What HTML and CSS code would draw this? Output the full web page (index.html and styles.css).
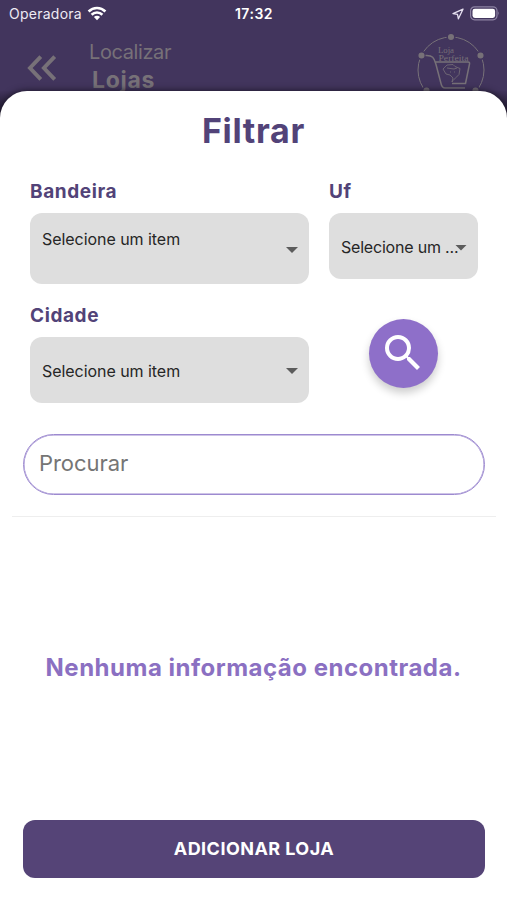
FILE: index.html
```html
<!DOCTYPE html>
<html lang="pt-BR">
<head>
<meta charset="utf-8">
<title>Filtrar lojas</title>
<link rel="stylesheet" href="styles.css">
</head>
<body>
<div class="screen">
  <header class="top">
    <div class="status">
      <div class="carrier"><span>Operadora</span>
        <svg width="20" height="15" viewBox="0 0 20 15" fill="none" stroke="#fff" stroke-width="2.6"><path d="M1.6 5.5a12 12 0 0 1 16.8 0M4.6 8.7a7.7 7.7 0 0 1 10.8 0"/><path d="M10 14.2 6.9 11.1a4.4 4.4 0 0 1 6.2 0Z" fill="#fff" stroke="none"/></svg>
      </div>
      <div class="clock">17:32</div>
      <div class="indicators">
        <svg width="12" height="12" viewBox="0 0 12 12" fill="none" stroke="#e6e0f0" stroke-width="1.3" stroke-linejoin="round"><path d="M11 1.2 1 5.6l4.5.8.9 4.4Z"/></svg>
        <svg width="30" height="15" viewBox="0 0 30 15"><rect x=".6" y=".8" width="26.4" height="13" rx="4" fill="none" stroke="#8d83a3" stroke-width="1.2"/><rect x="2.5" y="2.7" width="22.6" height="9.2" rx="2.3" fill="#fff"/><path d="M28 5.2q1.8 2 0 4.2Z" fill="#8d83a3"/></svg>
      </div>
    </div>
    <div class="bar">
      <svg class="back" width="30" height="26" viewBox="0 0 30 26" fill="none" stroke="#777178" stroke-width="3.9"><path d="M13.8 1.7 3 13l10.8 11.3M27.7 1.7 16.9 13l10.8 11.3"/></svg>
      <div class="heading"><div class="over">Localizar</div><div class="name">Lojas</div></div>
      <svg class="logo" width="70" height="70" viewBox="0 0 70 70" fill="none" stroke="#777178">
        <circle cx="34" cy="37" r="33" stroke-width="1"/>
        <g fill="#777178" stroke="#42355d" stroke-width="1.5"><circle cx="34" cy="4" r="3.8"/><circle cx="4.5" cy="22.5" r="3.8"/><circle cx="63.5" cy="22.5" r="3.8"/><circle cx="9.5" cy="57.5" r="3.8"/><circle cx="58.5" cy="57.5" r="3.8"/></g>
        <path d="M8.500 22.500c8-.5 8.500 3 10.500 9l5 19q1 4.500 4 4.500h20M18.500 29H51q2 0 1.500 2l-4 19.500H35" stroke-width="1.5"/>
        <path d="m35 49 1-4-3-3-4-1-3-5 4-4 6-.5 2 2 5 2-1 6-3 3-3 3ZM30 35l7 1 3-1M33 39h1M37 39h1" stroke-width=".8"/>
        <g class="brand" fill="#777178" stroke="none"><text x="21" y="20" textLength="16" lengthAdjust="spacingAndGlyphs">Loja</text><text x="21.5" y="27.5" textLength="30" lengthAdjust="spacingAndGlyphs">Perfeita</text></g>
      </svg>
    </div>
  </header>
  <main class="sheet">
    <h1>Filtrar</h1>
    <div class="filters">
      <section><label>Bandeira</label><div class="select tall"><span>Selecione um item</span><i></i></div></section>
      <section><label>Uf</label><div class="select short"><span>Selecione um ...</span><i></i></div></section>
      <section class="city"><label>Cidade</label><div class="select"><span>Selecione um item</span><i></i></div></section>
      <div class="action"><button class="search"><svg width="48" height="48" viewBox="0 0 24 24" fill="#fff"><path d="M15.500 14h-.79l-.28-.27A6.470 6.470 0 0 0 16 9.500 6.500 6.500 0 1 0 9.500 16c1.610 0 3.090-.59 4.230-1.570l.27.28v.79l5 4.990L20.490 19l-4.990-5zm-6 0C7.010 14 5 11.990 5 9.500S7.010 5 9.500 5 14 7.010 14 9.500 11.990 14 9.500 14z"/></svg></button></div>
    </div>
    <div class="query">Procurar</div>
    <hr>
    <p class="empty">Nenhuma informação encontrada.</p>
    <button class="add">ADICIONAR LOJA</button>
  </main>
</div>
</body>
</html>
```
FILE: styles.css
```css
* { box-sizing: border-box; }
body { margin: 0; font-family: Inter, "Liberation Sans", sans-serif; }
button { border: 0; padding: 0; font-family: inherit; }
svg { display: block; flex: none; }
.screen { width: 507px; height: 900px; overflow: hidden; display: flex; flex-direction: column; background: linear-gradient(#42355d 90px, #181323 118px); }
.top { height: 91px; flex: none; background: #42355d; color: #fff; }
.status { height: 28px; display: grid; grid-template-columns: 1fr auto 1fr; align-items: center; padding: 0 7px 0 9px; }
.carrier { display: flex; gap: 5px; align-items: center; font-size: 14px; letter-spacing: .25px; color: #eeeaf4; }
.carrier span, .clock { margin-top: -2px; }
.carrier svg { margin-top: -2px; }
.clock { margin-left: -1px; font-size: 14px; font-weight: 600; letter-spacing: .5px; }
.indicators { display: flex; justify-content: flex-end; align-items: center; gap: 6px; }
.indicators svg:last-child { margin-top: -2px; }
.bar { display: flex; height: 63px; color: #777178; }
.back { margin: 27px 0 0 27px; }
.heading { margin-left: 32px; white-space: nowrap; }
.over { margin-top: 10px; height: 28px; line-height: 28px; font-size: 20px; letter-spacing: -.4px; }
.name { height: 28px; line-height: 28px; margin-left: 3px; font-size: 23px; font-weight: 700; letter-spacing: .7px; }
.logo { margin: 5px 20px 0 auto; }
.brand { font: 8px "Liberation Serif", serif; }
.sheet { flex: 1; position: relative; background: #fff; border-radius: 27px 27px 0 0; box-shadow: 0 0 7px #181323; display: flex; flex-direction: column; }
h1 { margin: 20px 0 0; height: 40px; line-height: 40px; text-align: center; font-size: 34px; letter-spacing: .7px; color: #524378; }
.filters { display: grid; grid-template-columns: 279px 149px; column-gap: 20px; margin: 28px 30px 0; }
label { display: block; height: 34px; line-height: 25px; font-size: 19px; font-weight: 700; letter-spacing: .6px; color: #524378; }
.select { height: 66px; display: flex; align-items: center; justify-content: space-between; background: #dedede; border-radius: 12px; padding: 3px 11px 0 12px; font-size: 16px; letter-spacing: -.05px; color: #262626; white-space: nowrap; }
.select i { width: 12px; height: 6px; flex: none; background: #5c5c5c; clip-path: polygon(0 0, 100% 0, 50% 100%); }
.select span { margin-top: -2px; }
.select.tall { height: 71px; padding-top: 4px; }
.select.tall span { margin-top: -24px; }
.short { letter-spacing: -.2px; }
.select.short span { margin-top: -1px; }
.short i { margin-left: -6px; }
.city { padding-top: 19px; }
.city i, .tall i { margin-top: -1px; }
.action { padding: 35px 0 0 40px; }
.search { width: 69px; height: 69px; border-radius: 50%; background: #8e6fc9; display: flex; align-items: center; justify-content: center; box-shadow: 0 5px 9px #0003; }
.search svg { margin: -2px 0 0 -2px; }
.query { margin: 31px 22px 0 23px; height: 61px; border: 1.5px solid #9d8ad0; border-radius: 31px; padding: 0 15px; line-height: 57px; font-size: 22px; letter-spacing: -.05px; color: #757575; box-shadow: inset 0 0 0 .5px #9d8ad0; }
hr { margin: 21px 11px 0 12px; border: 0; height: 1px; background: #eee; flex: none; }
.empty { margin: 131px 0 0; line-height: 40px; text-align: center; font-size: 24px; font-weight: 700; letter-spacing: .5px; color: #8b70c2; white-space: nowrap; }
.add { margin: auto 22px 22px 23px; height: 58px; padding-bottom: 1px; border-radius: 12px; background: #554477; color: #fff; font-size: 18px; font-weight: 700; letter-spacing: .45px; }
```
